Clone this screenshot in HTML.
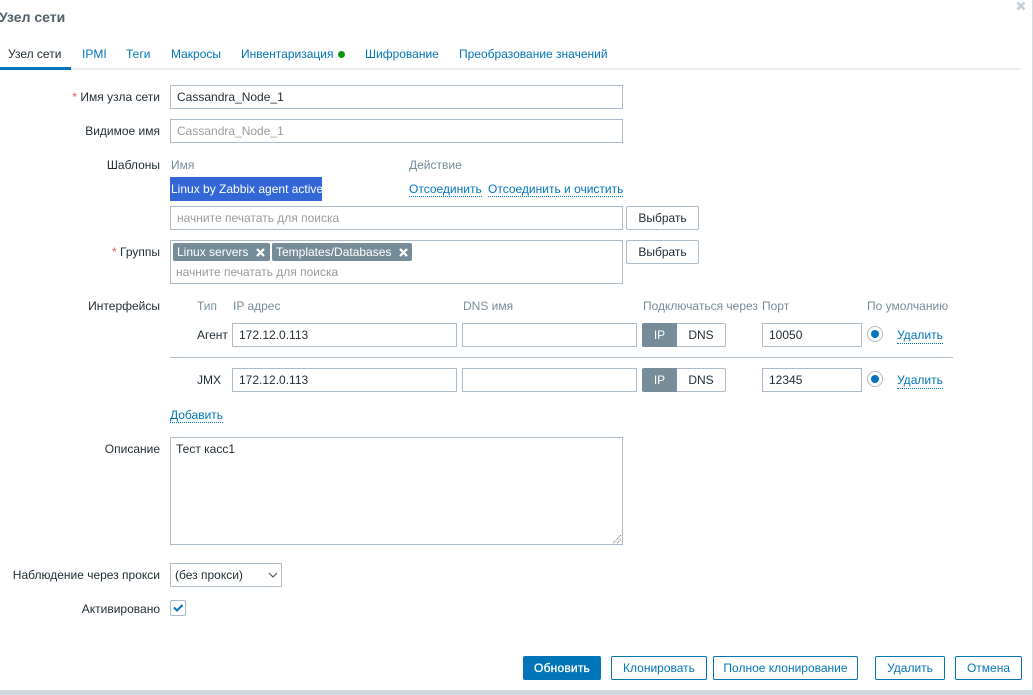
<!DOCTYPE html>
<html><head><meta charset="utf-8">
<style>
html,body{margin:0;padding:0;background:#fff;}
#p{position:relative;width:1033px;height:695px;overflow:hidden;background:#fff;font:12px/14px "Liberation Sans",Arial,sans-serif;color:#1f2c33;}
#p div,#p span.a,#p a{position:absolute;white-space:nowrap;box-sizing:border-box;}
.l{text-align:right;right:873px;}
.i{border:1px solid #acbbc7;background:#fff;height:24px;line-height:22px;padding-left:6px;color:#1f2c33;}
.g{color:#768d99;}
.ph{color:#9a9a9a;}
.t{color:#0275b8;top:47px;}
.lk{color:#0275b8;border-bottom:1px dotted #0275b8;line-height:13px;height:15px;}
.b{border:1px solid #acbbc7;border-radius:2px;background:#fff;height:24px;line-height:22px;text-align:center;color:#1f2c33;}
.fb{border:1px solid #0275b8;border-radius:2px;background:#fff;height:24px;line-height:22px;text-align:center;color:#0275b8;top:656px;}
.s{background:#768d99;border-radius:2px;height:18px;line-height:18px;color:#fff;top:243px;padding-left:4px;}
.sw{border:1px solid #acbbc7;border-radius:2px;width:84px;height:24px;left:642px;background:#fff;}
.sw i{position:absolute;left:-1px;top:-1px;width:35px;height:24px;background:#768d99;color:#fff;font-style:normal;text-align:center;line-height:24px;border-radius:2px 0 0 2px;}
.sw b{position:absolute;left:34px;top:0;width:48px;font-weight:normal;text-align:center;line-height:22px;color:#1f2c33;}
.r{width:16px;height:16px;border:1px solid #acbbc7;border-radius:50%;left:867px;background:#fff;}
.r::after{content:"";position:absolute;left:3px;top:3px;width:8px;height:8px;border-radius:50%;background:#0275b8;}
</style></head><body>
<div id="p">
<div style="left:1032px;top:0;width:1px;height:695px;background:#d5dde2"></div>
<div style="left:0;top:690px;width:1033px;height:5px;background:#cfd8dd"></div>
<div style="left:-1px;top:9px;font-size:14px;line-height:16px;font-weight:bold;color:#4f5f69;">Узел сети</div>
<svg style="position:absolute;left:1016px;top:1px" width="10" height="10" viewBox="0 0 10 10"><path d="M1.5 1.5L8.5 8.5M8.5 1.5L1.5 8.5" stroke="#c5ced4" stroke-width="2.4"/></svg>

<div style="left:0;top:68px;width:1021px;height:2px;background:#ebeef0"></div>
<div style="left:0;top:67px;width:71px;height:3px;background:#0275b8"></div>
<div style="left:8px;top:47px;color:#1f2c33">Узел сети</div>
<div class="t" style="left:82px">IPMI</div>
<div class="t" style="left:126px">Теги</div>
<div class="t" style="left:171px">Макросы</div>
<div class="t" style="left:241px">Инвентаризация</div>
<div style="left:338px;top:51px;width:7px;height:7px;border-radius:50%;background:#0a9a0a"></div>
<div class="t" style="left:365px">Шифрование</div>
<div class="t" style="left:459px">Преобразование значений</div>

<div class="l" style="top:90px"><span style="color:#e45959">*</span> Имя узла сети</div>
<div class="i" style="left:170px;top:85px;width:453px">Cassandra_Node_1</div>
<div class="l" style="top:124px">Видимое имя</div>
<div class="i ph" style="left:170px;top:119px;width:453px;color:#9a9a9a">Cassandra_Node_1</div>

<div class="l" style="top:158px">Шаблоны</div>
<div class="g" style="left:171px;top:158px">Имя</div>
<div class="g" style="left:409px;top:158px">Действие</div>
<div style="left:170px;top:177px;width:152px;height:24px;background:#3367d6;color:#fff;line-height:24px;padding-left:1px;overflow:hidden">Linux by Zabbix agent active</div>
<div class="lk" style="left:409px;top:182px;line-height:14px">Отсоединить</div>
<div class="lk" style="left:488px;top:182px;line-height:14px">Отсоединить и очистить</div>
<div class="i ph" style="left:170px;top:206px;width:453px;color:#9a9a9a">начните печатать для поиска</div>
<div class="b" style="left:626px;top:206px;width:73px">Выбрать</div>

<div class="l" style="top:245px"><span style="color:#e45959">*</span> Группы</div>
<div style="left:170px;top:240px;width:453px;height:44px;border:1px solid #acbbc7"></div>
<div class="s" style="left:173px;width:97px">Linux servers</div>
<svg style="position:absolute;left:256px;top:248px" width="9" height="9" viewBox="0 0 9 9"><path d="M1 1L8 8M8 1L1 8" stroke="#fff" stroke-width="2.2"/></svg>
<div class="s" style="left:272px;width:140px">Templates/Databases</div>
<svg style="position:absolute;left:399px;top:248px" width="9" height="9" viewBox="0 0 9 9"><path d="M1 1L8 8M8 1L1 8" stroke="#fff" stroke-width="2.2"/></svg>
<div class="ph" style="left:176px;top:265px">начните печатать для поиска</div>
<div class="b" style="left:626px;top:240px;width:73px">Выбрать</div>

<div class="l" style="top:299px">Интерфейсы</div>
<div class="g" style="left:197px;top:299px">Тип</div>
<div class="g" style="left:233px;top:299px">IP адрес</div>
<div class="g" style="left:463px;top:299px">DNS имя</div>
<div class="g" style="left:643px;top:299px">Подключаться через</div>
<div class="g" style="left:762px;top:299px">Порт</div>
<div class="g" style="left:867px;top:299px">По умолчанию</div>

<div style="left:197px;top:328px">Агент</div>
<div class="i" style="left:232px;top:323px;width:225px">172.12.0.113</div>
<div class="i" style="left:462px;top:323px;width:175px"></div>
<div class="sw" style="top:323px"><i>IP</i><b>DNS</b></div>
<div class="i" style="left:762px;top:323px;width:100px">10050</div>
<div class="r" style="top:326px"></div>
<div class="lk" style="left:897px;top:329px">Удалить</div>

<div style="left:170px;top:357px;width:783px;height:1px;background:#acbbc7"></div>

<div style="left:197px;top:373px">JMX</div>
<div class="i" style="left:232px;top:368px;width:225px">172.12.0.113</div>
<div class="i" style="left:462px;top:368px;width:175px"></div>
<div class="sw" style="top:368px"><i>IP</i><b>DNS</b></div>
<div class="i" style="left:762px;top:368px;width:100px">12345</div>
<div class="r" style="top:371px"></div>
<div class="lk" style="left:897px;top:374px">Удалить</div>

<div class="lk" style="left:170px;top:408px;line-height:14px">Добавить</div>

<div class="l" style="top:442px">Описание</div>
<div style="left:170px;top:437px;width:453px;height:108px;border:1px solid #acbbc7;padding:4px 5px;line-height:14px">Тест касс1</div>
<svg style="position:absolute;left:612px;top:534px" width="10" height="10" viewBox="0 0 10 10"><path d="M1 9L9 1M5 9L9 5" stroke="#666" stroke-width="1" stroke-dasharray="1 1"/></svg>

<div class="l" style="top:568px">Наблюдение через прокси</div>
<div class="i" style="left:170px;top:563px;width:112px;padding-left:4px">(без прокси)</div>
<svg style="position:absolute;left:268px;top:572px" width="10" height="6" viewBox="0 0 10 6"><path d="M1 1L5 5L9 1" fill="none" stroke="#4f5f69" stroke-width="1.2"/></svg>

<div class="l" style="top:602px">Активировано</div>
<div style="left:170px;top:600px;width:16px;height:16px;border:1px solid #acbbc7;border-radius:2px"></div>
<svg style="position:absolute;left:172px;top:603px" width="12" height="10" viewBox="0 0 12 10"><path d="M2 4.5L5 7.5L10.500 2" fill="none" stroke="#0275b8" stroke-width="2"/></svg>

<div style="left:523px;top:656px;width:78px;height:24px;background:#0275b8;border-radius:2px;color:#fff;text-align:center;line-height:24px;letter-spacing:.2px;-webkit-text-stroke:.3px #fff">Обновить</div>
<div class="fb" style="left:611px;width:96px">Клонировать</div>
<div class="fb" style="left:713px;width:145px">Полное клонирование</div>
<div class="fb" style="left:875px;width:70px">Удалить</div>
<div class="fb" style="left:955px;width:67px">Отмена</div>
</div>
</body></html>
